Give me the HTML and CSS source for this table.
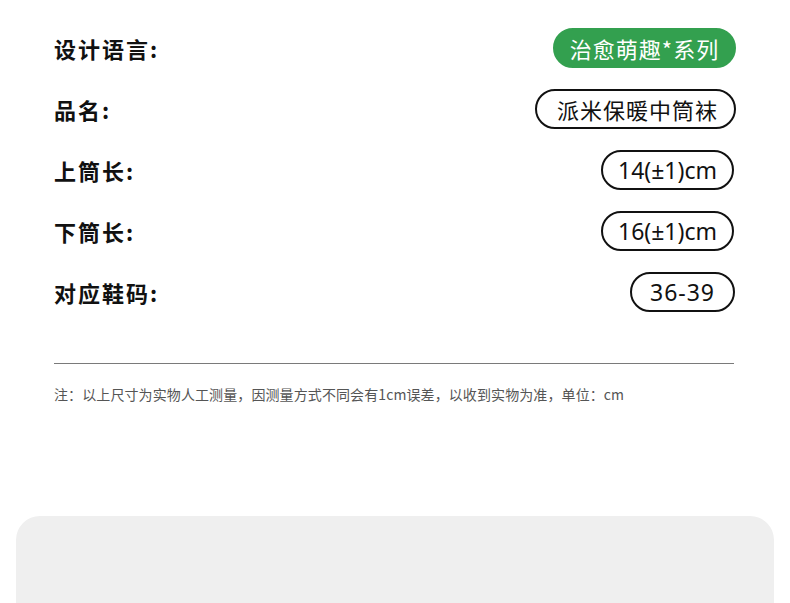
FILE: index.html
```html
<!DOCTYPE html>
<html lang="zh-CN">
<head>
<meta charset="utf-8">
<link rel="stylesheet" href="styles.css">
</head>
<body>
<div class="page">
  <div class="specs">
    <div class="row"><span class="label">设计语言:</span><span class="pill green">治愈萌趣*系列</span></div>
    <div class="row"><span class="label">品名:</span><span class="pill">派米保暖中筒袜</span></div>
    <div class="row"><span class="label">上筒长:</span><span class="pill num">14(±1)cm</span></div>
    <div class="row"><span class="label">下筒长:</span><span class="pill num">16(±1)cm</span></div>
    <div class="row"><span class="label">对应鞋码:</span><span class="pill num short">36-39</span></div>
  </div>
  <hr class="rule">
  <p class="note">注：以上尺寸为实物人工测量，因测量方式不同会有1cm误差，以收到实物为准，单位：cm</p>
  <div class="panel"></div>
</div>
</body>
</html>
```

FILE: styles.css
```css
* { box-sizing: border-box; }
html, body { margin: 0; padding: 0; background: #fff; }
body {
  width: 790px;
  height: 603px;
  overflow: hidden;
  font-family: "Noto Sans CJK SC", "Noto Sans", sans-serif;
  color: #111;
}
.page {
  display: flex;
  flex-direction: column;
}
.specs {
  display: flex;
  flex-direction: column;
  gap: 21px;
  padding: 28px 54px 0 54px;
}
.row {
  display: flex;
  justify-content: space-between;
  align-items: center;
  height: 40px;
}
.label {
  font-size: 22px;
  font-weight: 700;
  letter-spacing: 2px;
  color: #111;
}
.pill {
  height: 40px;
  display: flex;
  align-items: center;
  justify-content: center;
  border: 2px solid #111;
  border-radius: 20px;
  font-size: 22px;
  padding: 0 16px 0 20px;
  letter-spacing: 1px;
  color: #111;
}
.pill.green {
  background: #33a04f;
  border-color: #33a04f;
  color: #fff;
  width: 183px;
  padding: 0;
}
.pill.num {
  font-family: "Noto Sans", sans-serif;
  font-size: 23px;
  width: 133px;
  padding: 0;
  letter-spacing: 0;
  margin-right: 2px;
}
.pill.num.short {
  width: 105px;
  margin-right: 1px;
  letter-spacing: 1px;
}
.rule {
  margin: 51px 56px 0 54px;
  border: 0;
  border-top: 1px solid #7a7a7a;
  height: 0;
}
.note {
  margin: 20px 0 0 54px;
  font-size: 14px;
  line-height: 20px;
  letter-spacing: 0.1px;
  color: #555;
}
.panel {
  margin: 112px 16px 0 16px;
  height: 90px;
  background: #efefef;
  border-radius: 24px 24px 0 0;
}
```
